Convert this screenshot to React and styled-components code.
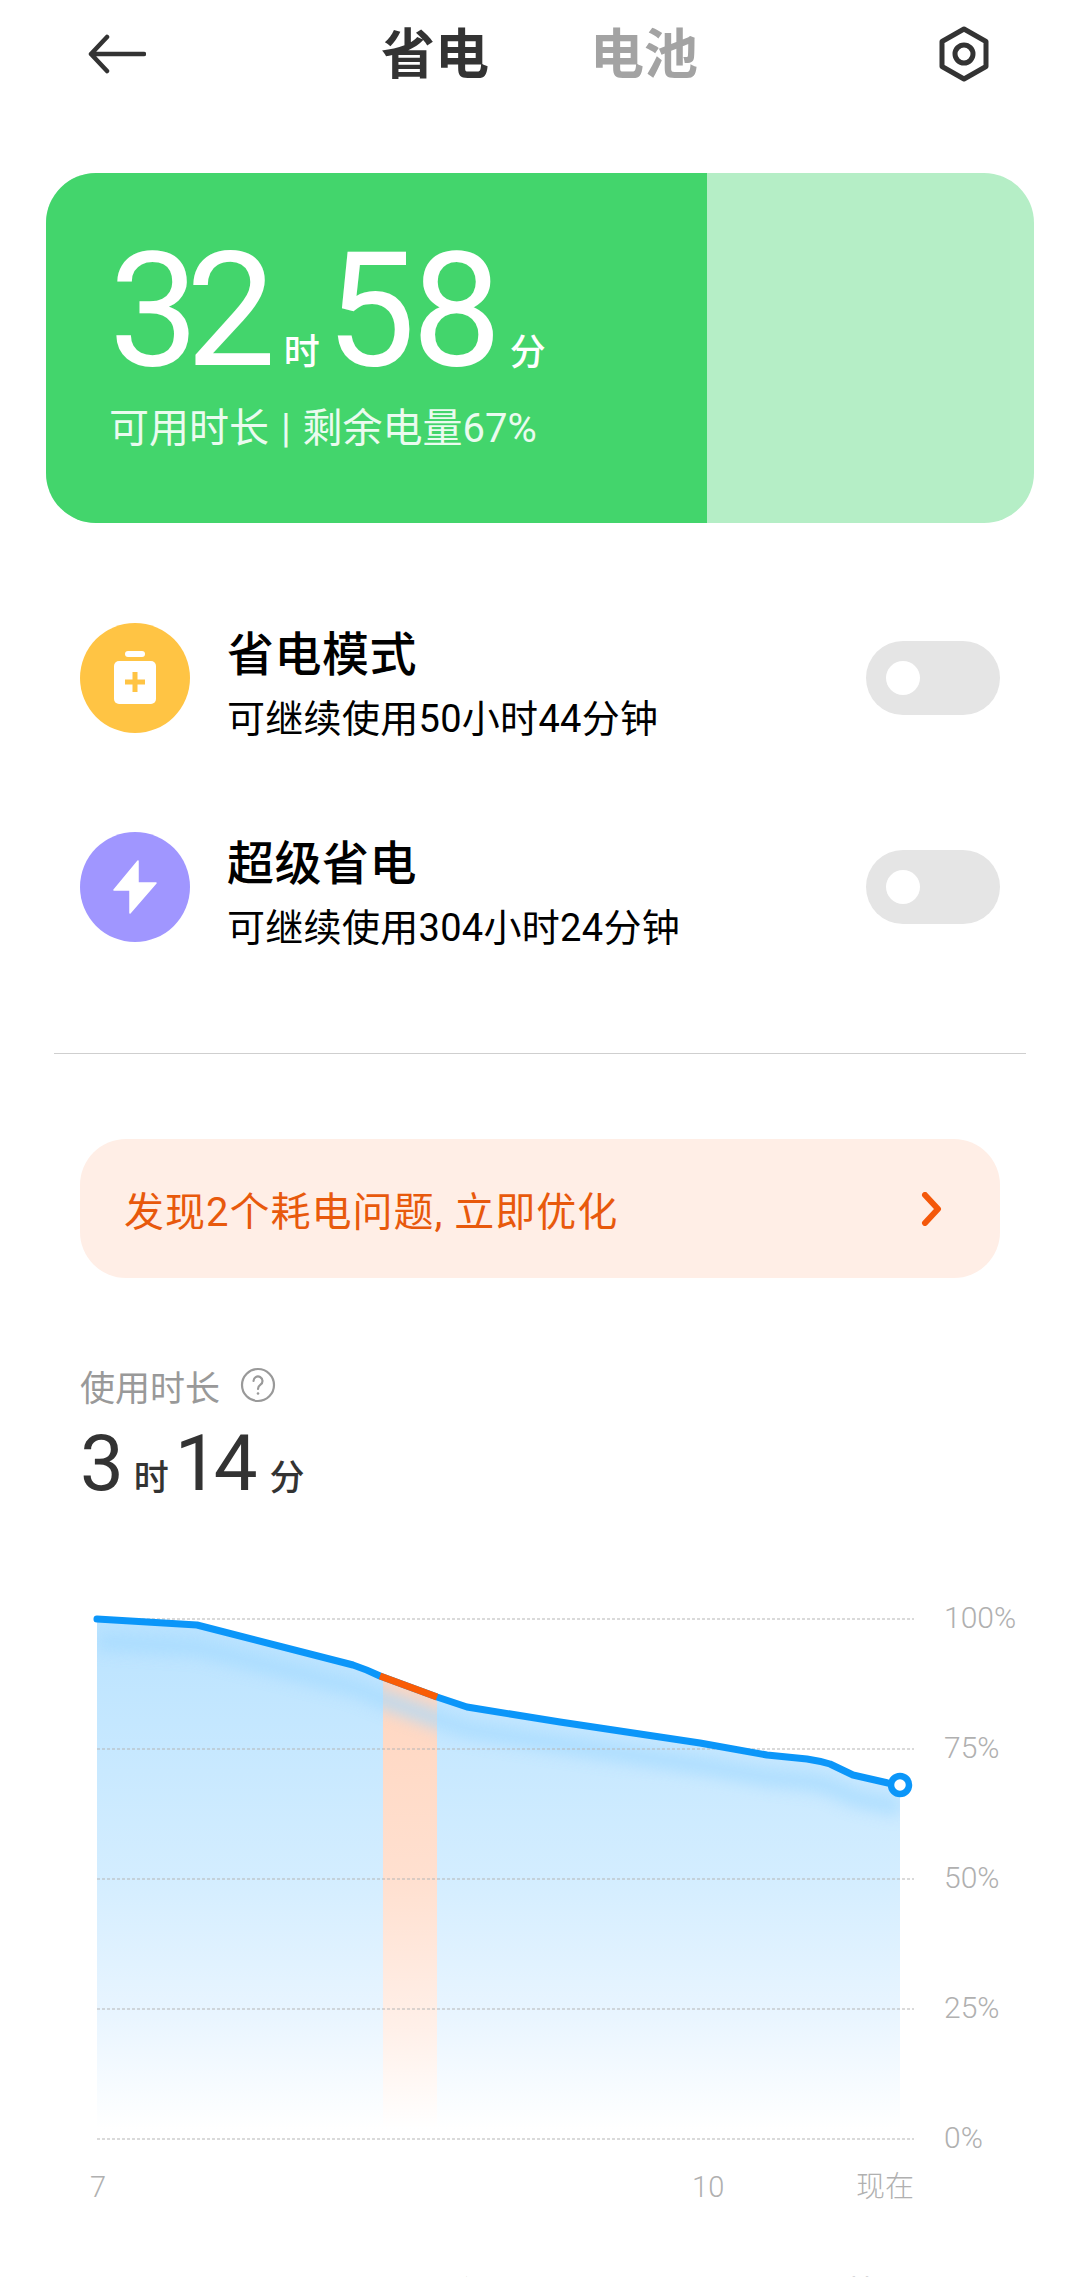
import React from "react";
import styled, { createGlobalStyle } from "styled-components";

const FONT = `"Roboto", "Noto Sans CJK SC", sans-serif`;

const GlobalStyle = createGlobalStyle`
	html, body {
		margin: 0;
		padding: 0;
		background: #fff;
	}
	body {
		font-family: ${FONT};
	}
`;

const Page = styled.div`
	width: 1080px;
	height: 2277px;
	overflow: hidden;
	background: #fff;
`;

const TopBar = styled.header`
	display: flex;
	align-items: center;
	justify-content: space-between;
	height: 108px;
	padding: 0 90px 0 88px;
`;

const Tabs = styled.nav`
	display: flex;
	gap: 101px;
	margin: 3px 5px 0 0;
`;

const Tab = styled.span`
	font-size: 54px;
	line-height: 60px;
	font-weight: 700;
	color: ${(p) => (p.$active ? "#333" : "#a3a3a3")};
`;

const BatteryCard = styled.section`
	display: flex;
	height: 350px;
	margin: 65px 46px 0;
	border-radius: 50px;
	overflow: hidden;
	background: #b5eec6;
`;

const BatteryFill = styled.div`
	width: 661px;
	padding: 54px 0 0 63px;
	box-sizing: border-box;
	background: #43d56c;
	color: #fff;
`;

const BigTime = styled.div`
	display: flex;
	align-items: baseline;
	height: 168px;
	line-height: 168px;
`;

const BigNum = styled.span`
	font-size: 160px;
	font-weight: 400;
	letter-spacing: ${(p) => p.$spacing}px;
`;

const BigUnit = styled.span`
	font-size: 36px;
	font-weight: 500;
	margin: 0 ${(p) => p.$right}px 0 ${(p) => p.$left}px;
`;

const BatteryNote = styled.div`
	margin-top: 9px;
	font-size: 40px;
	line-height: 50px;
	word-spacing: 2px;
	color: #eafbef;
`;

const Modes = styled.section`
	display: flex;
	flex-direction: column;
	gap: 99px;
	padding: 100px 80px 0 80px;
`;

const ModeRow = styled.div`
	display: flex;
	align-items: center;
	height: 110px;
`;

const ModeIcon = styled.div`
	display: flex;
	align-items: center;
	justify-content: center;
	flex: none;
	width: 110px;
	height: 110px;
	border-radius: 50%;
	background: ${(p) => p.$bg};
`;

const ModeText = styled.div`
	flex: 1;
	margin-left: 37px;
	padding-top: 14px;
`;

const ModeTitle = styled.div`
	font-size: 47px;
	line-height: 56px;
	font-weight: 500;
	letter-spacing: 0.5px;
	color: #000;
`;

const ModeSub = styled.div`
	margin-top: 12px;
	font-size: 38px;
	line-height: 48px;
	letter-spacing: 0.3px;
	color: #000;
`;

const Switch = styled.div`
	display: flex;
	align-items: center;
	flex: none;
	width: 134px;
	height: 74px;
	padding-left: 20px;
	box-sizing: border-box;
	border-radius: 37px;
	background: #e5e5e5;
`;

const Knob = styled.div`
	width: 34px;
	height: 34px;
	border-radius: 50%;
	background: #fff;
`;

const Divider = styled.hr`
	height: 1px;
	margin: 111px 54px 0;
	border: 0;
	background: #cfcfcf;
`;

const Notice = styled.div`
	display: flex;
	align-items: center;
	justify-content: space-between;
	height: 139px;
	margin: 85px 80px 0;
	padding: 0 58px 0 44px;
	border-radius: 46px;
	background: #ffeee6;
	color: #e8590c;
	font-size: 40px;
	letter-spacing: 1px;
`;

const UsageSection = styled.section`
	margin: 83px 0 0 80px;
`;

const UsageLabel = styled.div`
	display: flex;
	align-items: center;
	gap: 20px;
	height: 48px;
	font-size: 35px;
	color: #999;
`;

const UsageTime = styled.div`
	display: flex;
	align-items: baseline;
	margin-top: 15px;
	height: 80px;
	line-height: 80px;
	color: #333;
`;

const UsageNum = styled.span`
	font-size: 78px;
	font-weight: 400;
	letter-spacing: -5px;
`;

const UsageUnit = styled.span`
	font-size: 35px;
	font-weight: 500;
	margin: 0 ${(p) => p.$right}px 0 ${(p) => p.$left}px;
`;

const ChartRow = styled.div`
	display: flex;
	margin: 95px 0 0 88px;
`;

const YAxis = styled.div`
	display: flex;
	flex-direction: column;
	justify-content: space-between;
	height: 520px;
	margin: 0 0 0 30px;
	padding-top: 19px;
	font-size: 30px;
	line-height: 0;
	font-weight: 300;
	color: #b0b0b0;
`;

const XAxis = styled.div`
	display: flex;
	margin: 10px 0 0 90px;
	width: 824px;
	font-size: 29px;
	line-height: 36px;
	font-weight: 300;
	color: #b0b0b0;
`;

const TickTen = styled.span`
	margin-left: 586px;
`;

const TickNow = styled.span`
	margin-left: auto;
`;

const Legend = styled.div`
	display: flex;
	margin: 65px 0 0 82px;
`;

const LegendItem = styled.div`
	display: flex;
	gap: 20px;
	width: 387px;
	font-size: 32px;
	line-height: 46px;
	color: #666;
`;

const LegendDot = styled.i`
	width: 16px;
	height: 16px;
	margin-top: 12px;
	border-radius: 50%;
	background: ${(p) => p.$color};
`;

const BackIcon = () => (
	<svg width="58" height="40" viewBox="0 0 58 40" fill="none" stroke="#333" strokeWidth="4.5" strokeLinecap="round" strokeLinejoin="round">
		<path d="M56 20H3M19 3L3 20l16 17" />
	</svg>
);

const GearIcon = () => (
	<svg width="52" height="56" viewBox="0 0 52 56" fill="none" stroke="#333" strokeWidth="5" strokeLinejoin="round">
		<path d="M26 3l22 12.5v25L26 53 4 40.5v-25z" />
		<circle cx="26" cy="28" r="9" />
	</svg>
);

const BatteryPlusIcon = () => (
	<svg width="44" height="54" viewBox="0 0 44 54">
		<rect x="12" y="0" width="20" height="6" rx="3" fill="#fff" />
		<rect x="1" y="10" width="42" height="43" rx="5" fill="#fff" />
		<path d="M22 21v20M12 31h20" stroke="#ffc444" strokeWidth="5" />
	</svg>
);

const BoltIcon = () => (
	<svg width="44" height="54" viewBox="0 0 44 54">
		<path d="M25 1 L1 30 H17 V53 L43 23 H25 Z" fill="#fff" stroke="#fff" strokeWidth="1.5" strokeLinejoin="round" />
	</svg>
);

const QuestionIcon = () => (
	<svg width="36" height="36" viewBox="0 0 36 36" fill="none" stroke="#999" strokeWidth="2.2">
		<circle cx="18" cy="18" r="16" />
		<path d="M13.500 14a4.500 4.500 0 1 1 7 3.700c-1.700 1.200-2.500 2.200-2.500 4.300" strokeLinecap="round" />
		<circle cx="18" cy="26.500" r="1.300" fill="#999" stroke="none" />
	</svg>
);

const ChevronIcon = () => (
	<svg width="22" height="34" viewBox="0 0 22 34" fill="none" stroke="#f4580b" strokeWidth="6" strokeLinecap="round" strokeLinejoin="round">
		<path d="M5 3l13 14L5 31" />
	</svg>
);

// chart coordinates: x0 = page 88, first grid line at y = 20
const LINE = "M9 20 L109 26 L265 66 Q280 71 292 77 L349 98 L379 108 L472 123 L612 144 L679 156 L719 160 Q732 162 742 165 L765 176 L800 184 L812 186";
const AREA = `${LINE} V540 H9 Z`;
const GRID = [20, 150, 280, 410, 540];

const BatteryChart = () => (
	<svg width="826" height="560" viewBox="0 0 826 560" fill="none">
		<defs>
			<linearGradient id="areaFill" x1="0" y1="20" x2="0" y2="530" gradientUnits="userSpaceOnUse">
				<stop offset="0" stopColor="#bae3ff" />
				<stop offset="0.5" stopColor="#d3edff" />
				<stop offset="0.78" stopColor="#e9f5ff" />
				<stop offset="1" stopColor="#ffffff" />
			</linearGradient>
			<linearGradient id="warnFill" x1="0" y1="80" x2="0" y2="530" gradientUnits="userSpaceOnUse">
				<stop offset="0" stopColor="#ffd6c0" />
				<stop offset="0.45" stopColor="#ffe0d0" />
				<stop offset="0.78" stopColor="#fff0e9" />
				<stop offset="1" stopColor="#ffffff" />
			</linearGradient>
			<clipPath id="areaClip">
				<path d={AREA} />
			</clipPath>
			<filter id="soft" x="-10%" y="-50%" width="120%" height="200%">
				<feGaussianBlur stdDeviation="8" />
			</filter>
		</defs>
		<path d={AREA} fill="url(#areaFill)" />
		<path d="M295 79 L349 98 V540 H295 Z" fill="url(#warnFill)" />
		<g clipPath="url(#areaClip)">
			<path d={LINE} stroke="#a4daff" strokeWidth="16" transform="translate(0 22)" filter="url(#soft)" opacity="0.8" />
		</g>
		{GRID.map((y) => (
			<line key={y} x1="9" x2="826" y1={y} y2={y} stroke="#b5b5b5" strokeWidth="1" strokeDasharray="3 2" />
		))}
		<path d={LINE} stroke="#0b96f9" strokeWidth="7" strokeLinecap="round" strokeLinejoin="round" />
		<path d="M292 77 L349 98" stroke="#f95c05" strokeWidth="7" />
		<circle cx="812" cy="186" r="9" fill="#fff" stroke="#0b96f9" strokeWidth="6.500" />
	</svg>
);

export default function App() {
	return (
		<Page>
			<GlobalStyle />
			<TopBar>
				<BackIcon />
				<Tabs>
					<Tab $active>省电</Tab>
					<Tab>电池</Tab>
				</Tabs>
				<GearIcon />
			</TopBar>

			<BatteryCard>
				<BatteryFill>
					<BigTime>
						<BigNum $spacing={-13}>32</BigNum>
						<BigUnit $left={21} $right={6}>时</BigUnit>
						<BigNum $spacing={-4}>58</BigNum>
						<BigUnit $left={12} $right={0}>分</BigUnit>
					</BigTime>
					<BatteryNote>可用时长 | 剩余电量67%</BatteryNote>
				</BatteryFill>
			</BatteryCard>

			<Modes>
				<ModeRow>
					<ModeIcon $bg="#ffc444"><BatteryPlusIcon /></ModeIcon>
					<ModeText>
						<ModeTitle>省电模式</ModeTitle>
						<ModeSub>可继续使用50小时44分钟</ModeSub>
					</ModeText>
					<Switch><Knob /></Switch>
				</ModeRow>
				<ModeRow>
					<ModeIcon $bg="#a096ff"><BoltIcon /></ModeIcon>
					<ModeText>
						<ModeTitle>超级省电</ModeTitle>
						<ModeSub>可继续使用304小时24分钟</ModeSub>
					</ModeText>
					<Switch><Knob /></Switch>
				</ModeRow>
			</Modes>

			<Divider />

			<Notice>
				<span>发现2个耗电问题, 立即优化</span>
				<ChevronIcon />
			</Notice>

			<UsageSection>
				<UsageLabel>使用时长 <QuestionIcon /></UsageLabel>
				<UsageTime>
					<UsageNum>3</UsageNum>
					<UsageUnit $left={15} $right={6}>时</UsageUnit>
					<UsageNum>14</UsageNum>
					<UsageUnit $left={17} $right={0}>分</UsageUnit>
				</UsageTime>
			</UsageSection>

			<ChartRow>
				<BatteryChart />
				<YAxis>
					<span>100%</span>
					<span>75%</span>
					<span>50%</span>
					<span>25%</span>
					<span>0%</span>
				</YAxis>
			</ChartRow>
			<XAxis>
				<span>7</span>
				<TickTen>10</TickTen>
				<TickNow>现在</TickNow>
			</XAxis>

			<Legend>
				<LegendItem><LegendDot $color="#1a9fd9" />耗电</LegendItem>
				<LegendItem><LegendDot $color="#43d56c" />充电</LegendItem>
				<LegendItem><LegendDot $color="#f4580b" />耗电快</LegendItem>
			</Legend>
		</Page>
	);
}
